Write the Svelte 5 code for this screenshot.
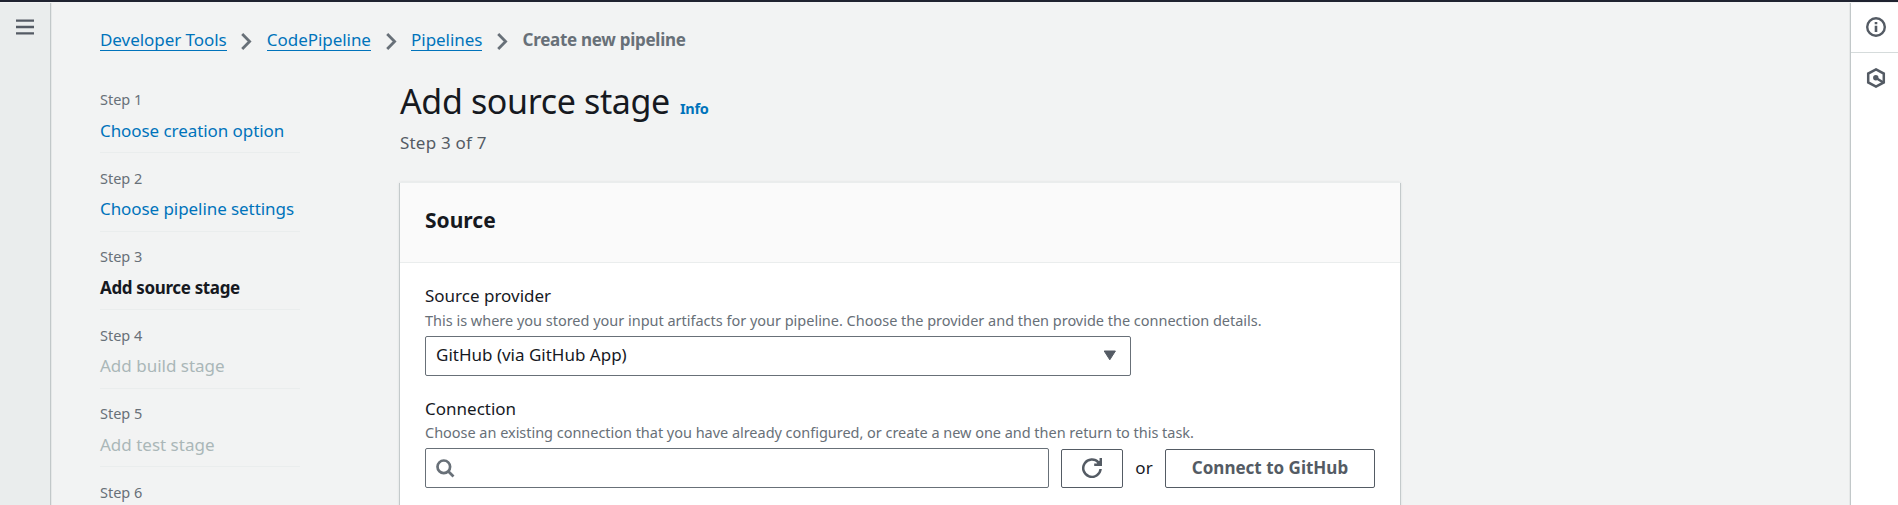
<script>
  const crumbs = ['Developer Tools', 'CodePipeline', 'Pipelines'];
  const steps = [
    { label: 'Choose creation option', state: 'link' },
    { label: 'Choose pipeline settings', state: 'link' },
    { label: 'Add source stage', state: 'current' },
    { label: 'Add build stage', state: 'disabled' },
    { label: 'Add test stage', state: 'disabled' },
    { label: '', state: 'disabled' }
  ];
</script>

<div class="page">
  <div class="topbar"></div>
  <div class="body">
    <aside class="left">
      <svg width="18" height="16" viewBox="0 0 18 16" fill="none" stroke="#545b64" stroke-width="2.3">
        <path d="M0 1.6h18M0 8h18M0 14.4h18" />
      </svg>
    </aside>

    <main>
      <nav class="crumbs">
        {#each crumbs as crumb}
          <a href="#top">{crumb}</a>
          <svg width="11" height="17" viewBox="0 0 11 17" fill="none" stroke="#687078" stroke-width="2.8">
            <path d="M1.2 1L8.6 8.5L1.2 16" />
          </svg>
        {/each}
        <span>Create new pipeline</span>
      </nav>

      <div class="columns">
        <ol class="steps">
          {#each steps as step, i}
            <li>
              <small>Step {i + 1}</small>
              {#if step.label}<span class={step.state}>{step.label}</span>{/if}
            </li>
          {/each}
        </ol>

        <section class="content">
          <header class="title">
            <h1>Add source stage</h1>
            <a href="#info">Info</a>
          </header>
          <p class="progress">Step 3 of 7</p>

          <div class="card">
            <h2>Source</h2>
            <div class="form">
              <div class="label">Source provider</div>
              <div class="hint">This is where you stored your input artifacts for your pipeline. Choose the provider and then provide the connection details.</div>
              <div class="select">
                <span>GitHub (via GitHub App)</span>
                <svg width="14" height="11" viewBox="0 0 14 11" fill="#545b64" stroke="#545b64" stroke-linejoin="round">
                  <path d="M1.2 1h11.2L6.8 9.8z" />
                </svg>
              </div>

              <div class="label second">Connection</div>
              <div class="hint conn">Choose an existing connection that you have already configured, or create a new one and then return to this task.</div>
              <div class="row">
                <div class="search">
                  <svg width="19" height="19" viewBox="0 0 19 19" fill="none" stroke="#687078" stroke-width="2.7">
                    <circle cx="7.8" cy="7.8" r="6.3" />
                    <path d="M12.2 12.2L17.5 17.5" />
                  </svg>
                </div>
                <button class="refresh" aria-label="Refresh">
                  <svg width="20" height="20" viewBox="0 0 20 20" fill="none" stroke="#545b64" stroke-width="2.5">
                    <path d="M18.6 11A8.7 8.7 0 1 1 16.4 4.4" />
                    <path d="M18.8 0V6.7H12.2" />
                    <path d="M14.4 6.6L18.9 2.1V6.6z" fill="#545b64" stroke-width="1" />
                  </svg>
                </button>
                <span class="or">or</span>
                <button class="connect">Connect to GitHub</button>
              </div>
            </div>
          </div>
        </section>
      </div>
    </main>

    <aside class="right">
      <div class="tool">
        <svg width="20" height="20" viewBox="0 0 20 20" fill="none" stroke="#545b64">
          <circle cx="10" cy="10" r="8.8" stroke-width="2.4" />
          <path d="M10 8.7v6.2M10 5v2.3" stroke-width="2.6" />
        </svg>
      </div>
      <div class="tool second">
        <svg width="20" height="20" viewBox="0 0 20 20" fill="none" stroke="#545b64" stroke-width="2.5">
          <path d="M10 1.4L17.8 5.6V14.4L10 18.6L2.2 14.4V5.6z" />
          <circle cx="9.8" cy="9.8" r="2.7" fill="#545b64" stroke="none" />
          <path d="M10 10L17 14.2" />
        </svg>
      </div>
    </aside>
  </div>
</div>

<style>
  :global(body) { margin: 0; overflow: hidden; }
  * { box-sizing: border-box; }
  .page {
    height: 505px;
    overflow: hidden;
    display: flex;
    flex-direction: column;
    background: #f2f3f3;
    color: #16191f;
    font: 17px/25px 'Noto Sans', sans-serif;
  }
  a { color: #0073bb; text-decoration: none; }
  .topbar { flex: none; height: 2px; background: #1f2330; }
  .body { flex: 1; min-height: 0; display: flex; }
  .left {
    flex: none;
    width: 51px;
    margin-top: 1px;
    padding: 16px 0 0 16px;
    background: #eaeded;
    border-right: 1px solid #c2c8c9;
    box-shadow: 1px 0 0 #e6e8e8;
  }
  svg { display: block; flex: none; }
  main { flex: 1; padding: 25px 0 0 49px; }
  .crumbs { display: flex; align-items: flex-start; }
  .crumbs a { height: 24px; border-bottom: 1px solid #0073bb; letter-spacing: -0.05px; }
  .crumbs svg { margin: 6px 14.6px 0; }
  .crumbs span { color: #687078; font-weight: 700; letter-spacing: -0.28px; }
  .columns { display: flex; align-items: flex-start; }
  .steps {
    flex: none;
    width: 200px;
    margin: 22.5px 100px 0 0;
    padding: 0;
    list-style: none;
  }
  .steps li {
    height: 78.5px;
    padding-top: 15.5px;
    border-bottom: 1px solid #eaeded;
  }
  .steps small {
    display: block;
    margin-bottom: 8.7px;
    font-size: 14.5px;
    line-height: 19px;
    color: #687078;
  }
  .steps span { display: block; white-space: nowrap; letter-spacing: -0.07px; }
  .steps .link { color: #0073bb; }
  .steps .current { font-weight: 700; letter-spacing: -0.35px; }
  .steps .disabled { color: #aab7b8; letter-spacing: 0; }
  .content { flex: none; width: 1000px; padding-top: 26.5px; }
  .title { display: flex; align-items: baseline; gap: 10px; }
  h1 { margin: 0; font-size: 34px; font-weight: 400; line-height: 44px; letter-spacing: -0.36px; }
  .title a { font-size: 14.5px; font-weight: 700; letter-spacing: -0.3px; }
  .progress { margin: 7px 0 0; color: #545b64; letter-spacing: 0.2px; }
  .card {
    height: 400px;
    margin-top: 27px;
    background: #fff;
    border-top: 1px solid #eaeded;
    box-shadow: -1px 1px 0 #c4cacb, 1px 1px 0 #c4cacb, 0 1px 3px rgba(0, 28, 36, 0.2);
  }
  h2 {
    height: 80px;
    margin: 0;
    padding: 22px 25px 0;
    font-size: 21px;
    line-height: 30px;
    font-weight: 700;
    background: #fafafa;
    border-bottom: 1px solid #eaeded;
  }
  .form { padding: 20px 25px 0; }
  .hint {
    font-size: 14.5px;
    line-height: 20px;
    letter-spacing: -0.015px;
    color: #687078;
    white-space: nowrap;
    margin-bottom: 6px;
    margin-top: 2px;
  }
  .select {
    width: 706px;
    height: 40px;
    padding: 0 13px 0 10px;
    display: flex;
    align-items: center;
    justify-content: space-between;
    border: 1px solid #687078;
    border-radius: 2px;
  }
  .select span { padding-bottom: 2px; }
  .second.label { margin-top: 20px; }
  .hint.conn { margin-top: 1px; letter-spacing: -0.03px; }
  .row { display: flex; align-items: flex-end; }
  .search {
    width: 624px;
    height: 40px;
    padding: 10px;
    border: 1px solid #687078;
    border-radius: 2px;
  }
  button {
    height: 39px;
    padding: 0 0 2px;
    display: flex;
    align-items: center;
    justify-content: center;
    background: #fff;
    color: #545b64;
    font: 700 17px/25px 'Noto Sans', sans-serif;
    border: 1px solid #545b64;
    border-radius: 2px;
  }
  .refresh { width: 62px; margin-left: 12px; padding: 0; }
  .or { width: 42px; height: 33px; text-align: center; }
  .connect { width: 210px; }
  .right {
    flex: none;
    width: 47px;
    margin-top: 1px;
    background: #fff;
    box-shadow: -1px 0 0 #c2c8c9, -2px 0 0 #e6e8e8;
  }
  .tool { height: 50px; padding: 14px 0 0 15px; border-bottom: 1px solid #d5dbdb; }
  .tool.second { padding-top: 15px; border: 0; }
</style>
